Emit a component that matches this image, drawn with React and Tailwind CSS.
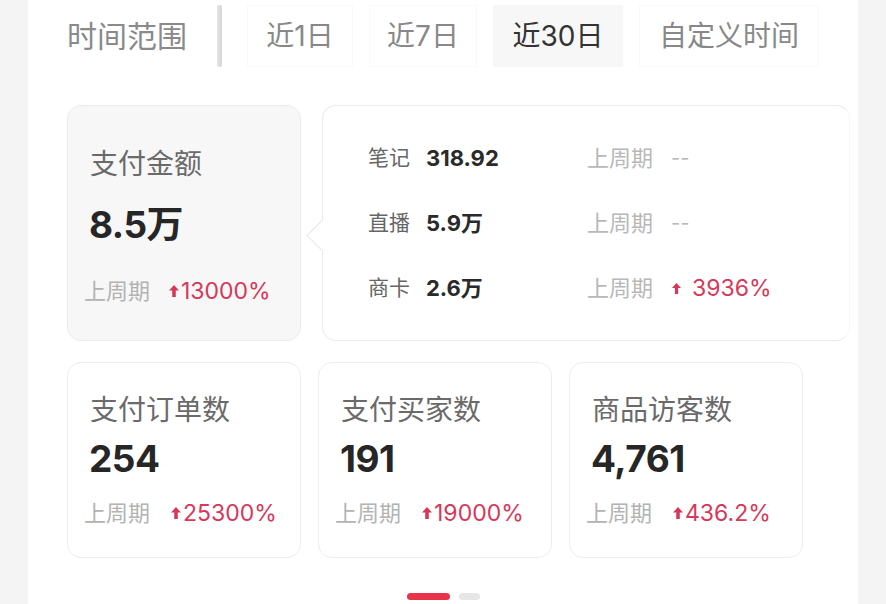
import React from "react";

const FONT = { fontFamily: '"Inter", "Noto Sans CJK SC", sans-serif' };

function Up({ className = "" }) {
  return (
    <svg viewBox="0 0 10 12" className={className} fill="#d6385a">
      <path d="M5 0 L10 5.4 L6.8 5.4 L6.8 12 L3.2 12 L3.2 5.4 L0 5.4 Z" />
    </svg>
  );
}

function Stat({ title, value, pct }) {
  return (
    <div className="w-[234px] h-[196px] rounded-[14px] border border-[#ededed] bg-white flex flex-col pl-[22px]">
      <div className="mt-[30px] h-[34px] leading-[34px] text-[28px] text-[#6a6a6a]">{title}</div>
      <div className="mt-[10px] h-[44px] leading-[44px] text-[37px] font-bold text-[#262626] tracking-[-0.5px] ml-[-1px]">{value}</div>
      <div className="mt-[17px] h-[30px] flex items-center ml-[-6px]">
        <span className="text-[22px] text-[#b3b3b3]">上周期</span>
        <Up className="w-[10px] h-[12px] ml-[21px] mr-[2px]" />
        <span className="text-[23px] text-[#d6385a]">{pct}</span>
      </div>
    </div>
  );
}

function Row({ label, value, right }) {
  return (
    <div className="h-[40px] flex items-center">
      <div className="w-[219px] flex items-center">
        <span className="text-[21px] text-[#666]">{label}</span>
        <span className="ml-[16px] text-[22px] font-bold text-[#2a2a2a]">{value}</span>
      </div>
      <span className="text-[22px] text-[#b8b8b8]">上周期</span>
      {right}
    </div>
  );
}

export default function App() {
  return (
    <div className="w-[886px] h-[604px] flex overflow-hidden bg-white" style={FONT}>
      <div className="w-[28px] h-full bg-[#f4f4f4]" />
      <div className="w-[830px] h-full bg-white flex flex-col pl-[39px]">
        {/* Tabs */}
        <div className="mt-[5px] h-[62px] flex items-center">
          <div className="w-[150px] text-[30px] text-[#8a8a8a] leading-none">时间范围</div>
          <div className="w-[5px] h-[62px] bg-gradient-to-r from-[#e4e4e4] to-[#d6d6d6] rounded-[2px]" />
          <div className="ml-[25px] flex gap-4 h-[62px]">
            <div className="w-[106px] h-full flex items-center justify-center text-[28px] text-[#888] border border-[#f9f9f9]">近1日</div>
            <div className="w-[108px] h-full flex items-center justify-center text-[28px] text-[#888] border border-[#f9f9f9]">近7日</div>
            <div className="w-[130px] h-full flex items-center justify-center text-[28px] text-[#333] bg-[#f7f7f7]">近30日</div>
            <div className="w-[180px] h-full flex items-center justify-center text-[28px] text-[#888] border border-[#f9f9f9]">自定义时间</div>
          </div>
        </div>

        {/* Top row */}
        <div className="mt-[38px] flex h-[236px]">
          <div className="w-[234px] h-full rounded-[14px] border border-[#ebebeb] bg-[#f7f7f7] flex flex-col pl-[22px]">
            <div className="mt-[41px] h-[34px] leading-[34px] text-[28px] text-[#6a6a6a]">支付金额</div>
            <div className="mt-[22px] h-[44px] leading-[44px] text-[37px] font-bold text-[#262626] tracking-[-0.5px] ml-[-1px]">8.5万</div>
            <div className="mt-[29px] h-[30px] flex items-center ml-[-6px]">
              <span className="text-[22px] text-[#b3b3b3]">上周期</span>
              <Up className="w-[10px] h-[12px] ml-[19px] mr-[2px]" />
              <span className="text-[23px] text-[#d6385a]">13000%</span>
            </div>
          </div>
          <div className="relative ml-[21px] w-[528px] h-full rounded-[14px] border border-[#ebebeb] border-r-[#f7f7f7] bg-white flex flex-col pl-[45px] pt-[32px] gap-[25px]">
            <div className="absolute left-[-12px] top-[118px] w-[23px] h-[23px] rotate-45 bg-white border-l border-b border-[#e6e6e6]" />
            <Row label="笔记" value="318.92" right={<span className="ml-[18px] text-[20px] text-[#b8b8b8]">--</span>} />
            <Row label="直播" value="5.9万" right={<span className="ml-[18px] text-[20px] text-[#b8b8b8]">--</span>} />
            <Row
              label="商卡"
              value="2.6万"
              right={
                <span className="flex items-center ml-[19px]">
                  <Up className="w-[9px] h-[11px] mr-[11px]" />
                  <span className="text-[23px] text-[#d6385a]">3936%</span>
                </span>
              }
            />
          </div>
        </div>

        {/* Bottom row */}
        <div className="mt-[21px] flex gap-[17px]">
          <Stat title="支付订单数" value="254" pct="25300%" />
          <Stat title="支付买家数" value="191" pct="19000%" />
          <Stat title="商品访客数" value="4,761" pct="436.2%" />
        </div>

        {/* Dots */}
        <div className="mt-[35px] flex justify-center gap-[9px] ml-[-39px]">
          <div className="w-[43px] h-[7px] rounded-full bg-[#e8334a]" />
          <div className="w-[21px] h-[7px] rounded-full bg-[#e6e6e6]" />
        </div>
      </div>
      <div className="w-[28px] h-full bg-[#f4f4f4]" />
    </div>
  );
}
